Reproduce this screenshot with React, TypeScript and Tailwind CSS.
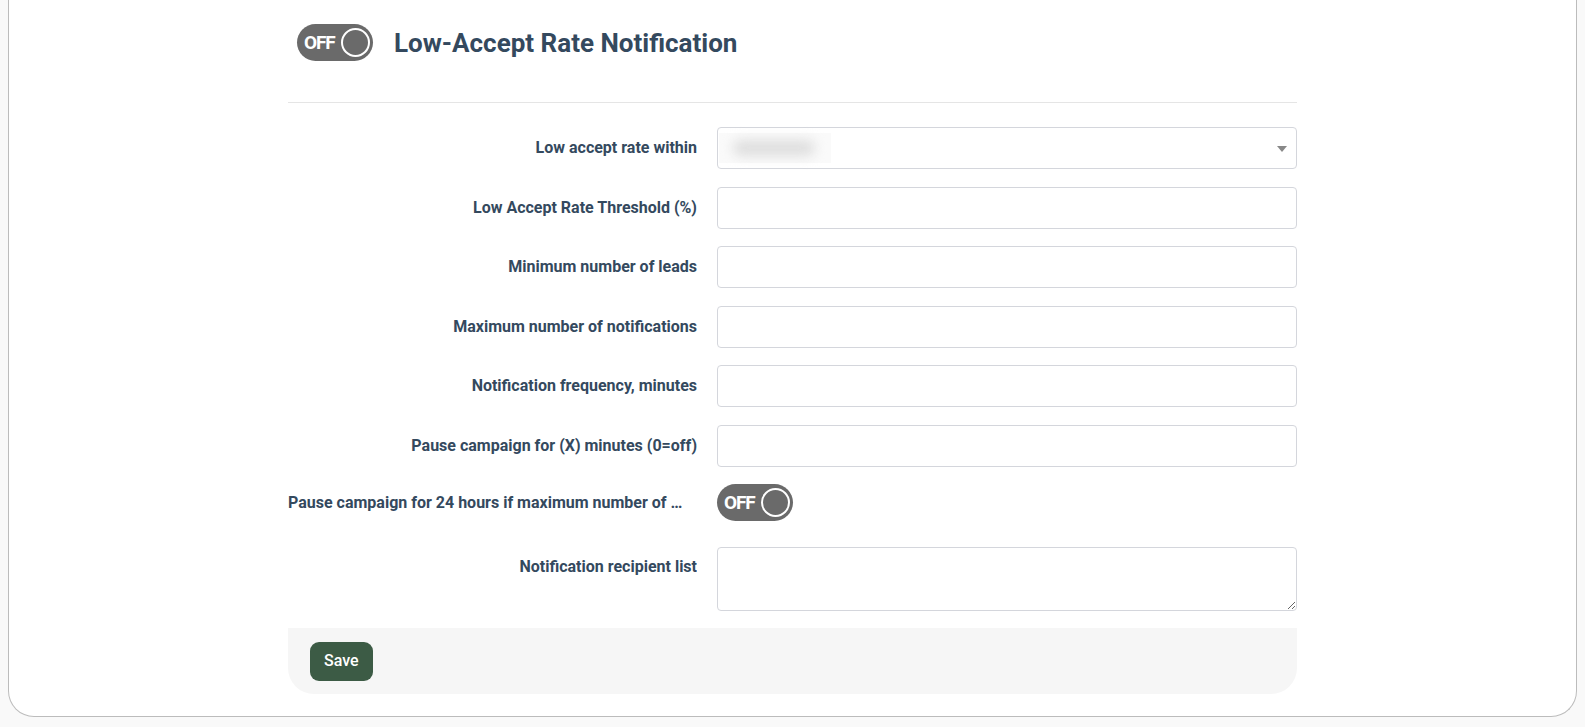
import React from "react";

const labelCls =
  "w-[409px] shrink-0 text-right text-[16px] font-bold leading-5 text-[#34495e] truncate";

const inputCls =
  "w-[580px] h-[42px] rounded-[4px] border border-[#d4d6dc] bg-white px-3 text-[14px] outline-none";

const Toggle: React.FC = () => (
  <div className="flex h-[37px] w-[76px] shrink-0 items-center justify-between rounded-full bg-[#6a6a6a] pl-[7px] pr-[3px]">
    <span className="text-[19px] font-bold leading-none tracking-[-1.2px] text-white">OFF</span>
    <span className="h-[29px] w-[29px] rounded-full border-[2.5px] border-white" />
  </div>
);

const fields = [
  "Low Accept Rate Threshold (%)",
  "Minimum number of leads",
  "Maximum number of notifications",
  "Notification frequency, minutes",
  "Pause campaign for (X) minutes (0=off)",
];

export default function App() {
  return (
    <div
      className="min-h-[727px] bg-[#f9f9f9] px-2 pb-[11px]"
      style={{ fontFamily: "Roboto, 'Liberation Sans', sans-serif" }}
    >
      <div className="rounded-b-[26px] border-x border-b border-[#bcbcbc] bg-white pb-[22px]">
        <div className="mx-auto w-[1009px]">
          {/* header */}
          <div className="flex items-center gap-[21px] border-b border-[#e5e5e5] pl-[9px] pt-[24px] pb-[41px]">
            <Toggle />
            <h2 className="text-[26px] font-bold leading-none text-[#34495e]">
              Low-Accept Rate Notification
            </h2>
          </div>

          {/* form */}
          <div className="flex flex-col gap-[17.5px] pt-[24px]">
            <div className="flex items-start gap-[20px]">
              <label className={`${labelCls} pt-[11px]`}>Low accept rate within</label>
              <div className="relative flex h-[42px] w-[580px] items-center rounded-[4px] border border-[#d4d6dc] bg-white">
                <div className="ml-[1px] flex h-[30px] w-[112px] items-center bg-[#fafafa] pl-[14px]">
                  <div className="h-[16px] w-[82px] rounded-full bg-[#dedede] blur-[6px]" />
                </div>
                <span className="absolute right-[9px] top-[18px] h-0 w-0 border-x-[5px] border-t-[6px] border-x-transparent border-t-[#888888]" />
              </div>
            </div>

            {fields.map((f) => (
              <div key={f} className="flex items-start gap-[20px]">
                <label className={`${labelCls} pt-[11px]`}>{f}</label>
                <input className={inputCls} />
              </div>
            ))}

            <div className="flex h-[45px] items-start gap-[20px]">
              <label className={`${labelCls} pt-[9px] pr-[12px]`}>
                Pause campaign for 24 hours if maximum number of notifications is reached
              </label>
              <Toggle />
            </div>

            <div className="flex items-start gap-[20px]">
              <label className={`${labelCls} pt-[10px]`}>Notification recipient list</label>
              <textarea className="h-[64px] w-[580px] rounded-[4px] border border-[#d4d6dc] bg-white px-3 text-[14px] outline-none" />
            </div>
          </div>

          {/* footer */}
          <div className="mt-[17px] flex h-[66px] items-start rounded-b-[26px] bg-[#f6f6f6] pl-[22px] pt-[14px]">
            <button className="h-[39px] rounded-[9px] bg-[#3c5b45] px-[14px] text-[16px] font-medium text-white">
              Save
            </button>
          </div>
        </div>
      </div>
    </div>
  );
}
